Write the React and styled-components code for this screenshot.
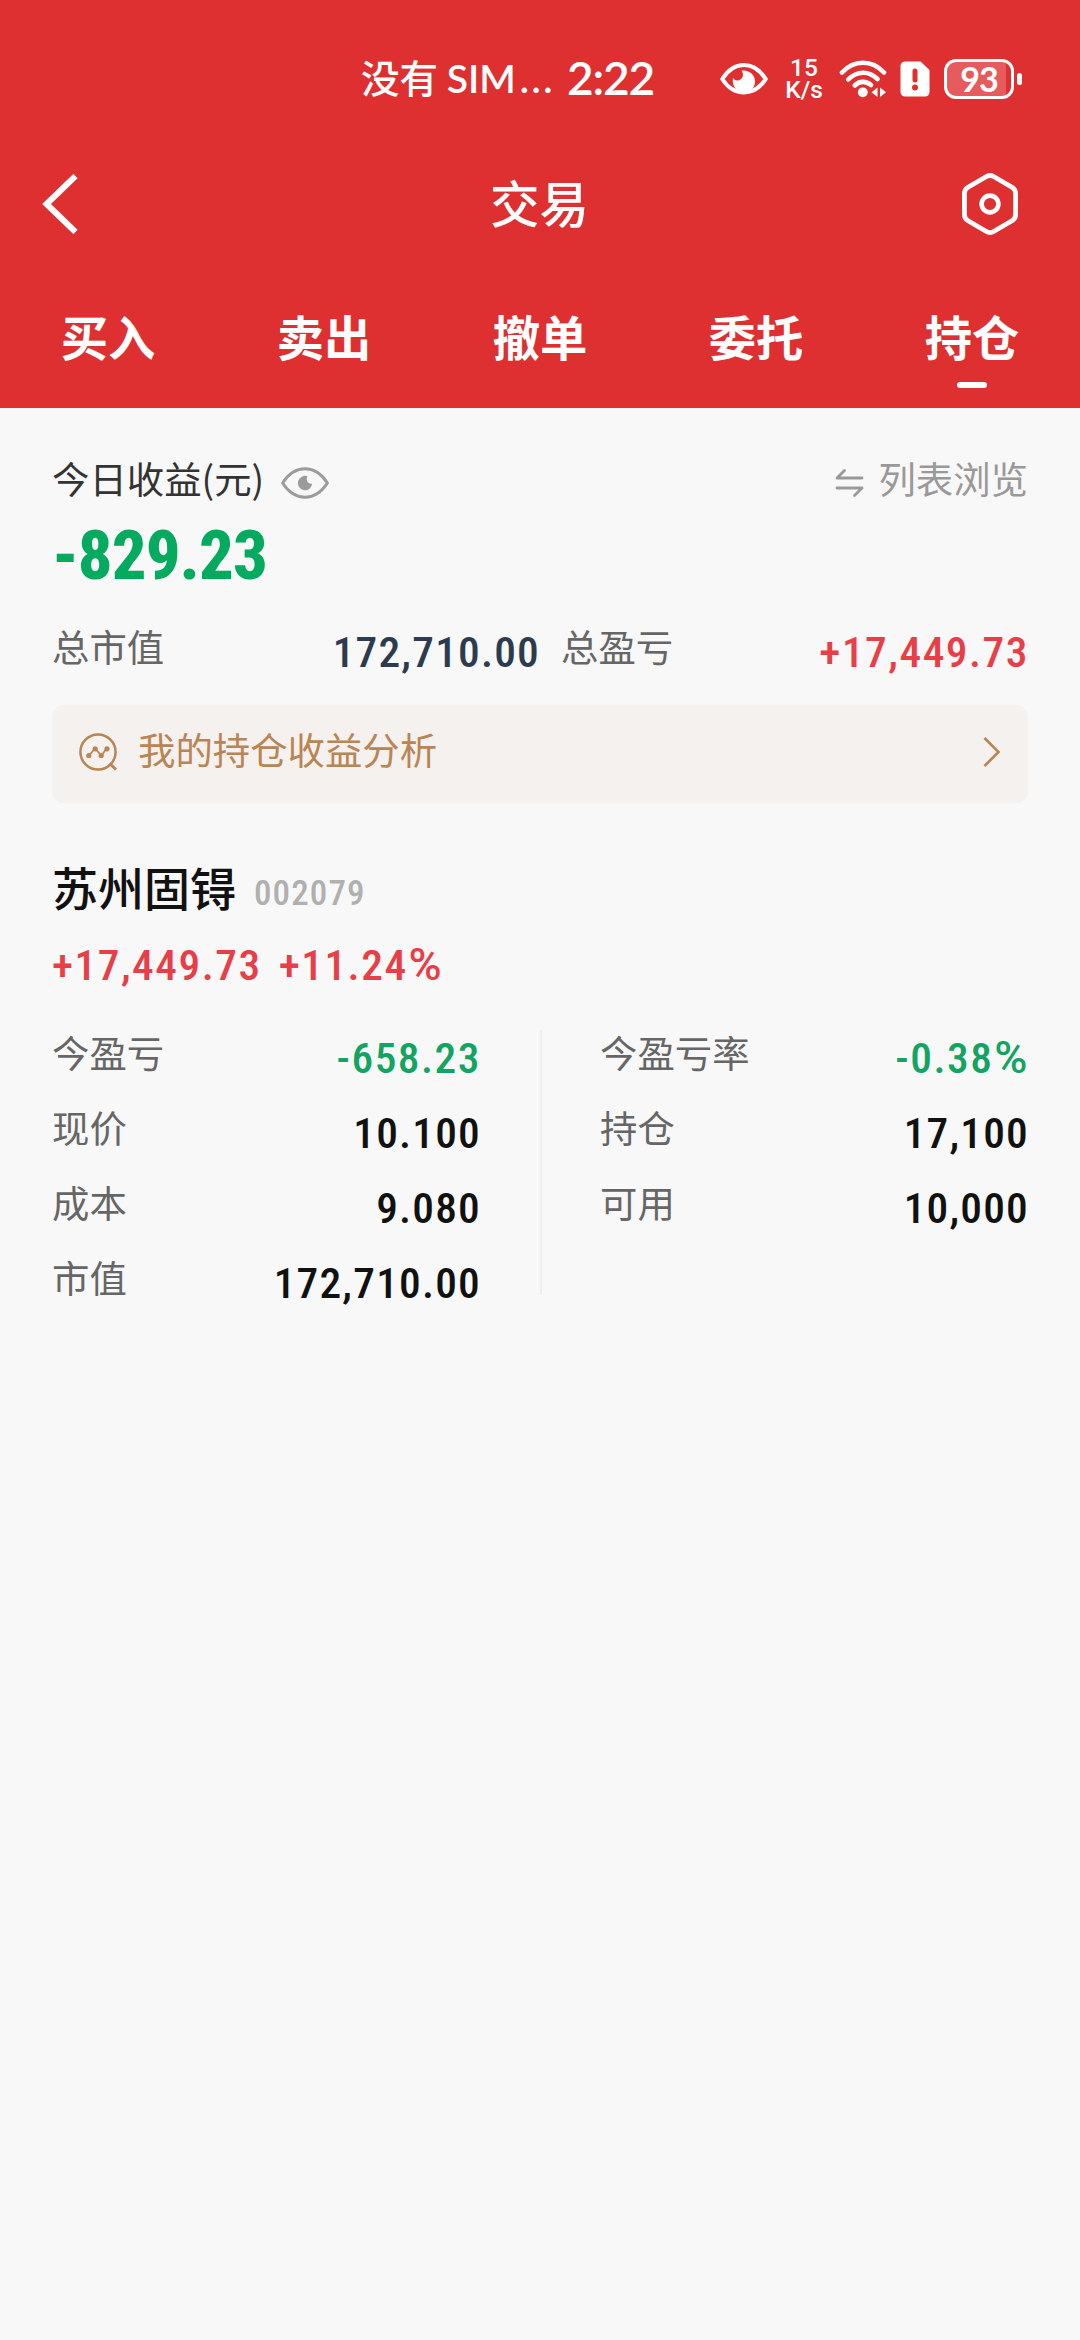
import React from 'react';
import styled, { createGlobalStyle } from 'styled-components';

const TABS = ['买入', '卖出', '撤单', '委托', '持仓'];

const LEFT = [
  { label: '今盈亏', value: '-658.23', tone: 'down' },
  { label: '现价', value: '10.100' },
  { label: '成本', value: '9.080' },
  { label: '市值', value: '172,710.00' },
];

const RIGHT = [
  { label: '今盈亏率', value: '-0.38', unit: '%', tone: 'down' },
  { label: '持仓', value: '17,100' },
  { label: '可用', value: '10,000' },
];

const tones = {
  up: '#e83e47',
  down: '#14a462',
  navy: '#2c3b4d',
  ink: '#111111',
};

const StatusBar = () => (
  <Status>
    <Carrier>没有 <Latin>SIM<Dots>...</Dots></Latin></Carrier>
    <Clock>2:22</Clock>
    <StatusIcons>
      <svg width="48" height="34" viewBox="0 0 48 34" fill="none">
        <path d="M2.200 17C8 8 16 3 24 3s16 5 21.800 14C40 26 32 30.500 24 30.500S8 26 2.200 17z" stroke="#fff" strokeWidth="4" strokeLinejoin="round" />
        <path d="M21.500 8.600c3 4.400 1 9-3 9.800-2.600.5-4.600-.6-5.500-2.400C11.500 24 17 30.500 24 30.500c6.500 0 11-5 11-11 0-6.500-5.500-11.900-13.500-10.900z" fill="#fff" />
      </svg>
      <Speed>
        <span>15</span>
        <span>K/s</span>
      </Speed>
      <svg width="48" height="38" viewBox="0 0 48 38" fill="none">
        <g stroke="#fff" strokeWidth="4.600" strokeLinecap="round">
          <path d="M3 12.500C15 -0.500 33 -0.500 45 12.500" />
          <path d="M9.200 19.500C18 10.500 30 10.500 38.500 19" />
          <path d="M15.700 25.500C20.500 20.800 27 20.800 32 25" />
        </g>
        <circle cx="23.800" cy="32.300" r="4.900" fill="#fff" />
        <path d="M38.500 27.500v9.500l-6-4.800zM41 27.500v9.500l6-4.800z" fill="#fff" />
      </svg>
      <SimIcon width="30" height="36" viewBox="0 0 30 36">
        <path d="M5 .5h15.500L29.500 9v22a4.500 4.500 0 0 1-4.500 4.500H5A4.500 4.500 0 0 1 .5 31V5A4.500 4.500 0 0 1 5 .5z" fill="#fff" />
        <path d="M15 10v9" stroke="#de3031" strokeWidth="5" strokeLinecap="round" />
        <circle cx="15" cy="26.500" r="3" fill="#de3031" />
      </SimIcon>
      <Battery>
        <BatteryBody>93</BatteryBody>
        <BatteryTip />
      </Battery>
    </StatusIcons>
  </Status>
);

const Header = () => (
  <Top>
    <StatusBar />
    <TitleBar>
      <svg width="37" height="60" viewBox="0 0 37 60" fill="none">
        <path d="M33.500 2L4.500 30l29 28" stroke="#fff" strokeWidth="6" />
      </svg>
      <Title>交易</Title>
      <svg width="58" height="64" viewBox="0 0 58 64" fill="none" stroke="#fff">
        <path
          d="M25.400 4.500Q29 2.400 32.600 4.500L51 15.200Q54.600 17.300 54.600 21.500V42.500Q54.600 46.700 51 48.800L32.600 59.500Q29 61.600 25.400 59.500L7 48.800Q3.400 46.700 3.400 42.500V21.500Q3.400 17.300 7 15.200Z"
          strokeWidth="4.800"
        />
        <circle cx="29" cy="32" r="8.400" strokeWidth="4.600" />
      </svg>
    </TitleBar>
    <Tabs>
      {TABS.map(tab => (
        <Tab key={tab} $active={tab === '持仓'}>{tab}</Tab>
      ))}
    </Tabs>
  </Top>
);

const Summary = () => (
  <div>
    <IncomeHead>
      <IncomeLabel>今日收益(元)</IncomeLabel>
      <EyeIcon width="50" height="34" viewBox="0 0 50 34" fill="none">
        <path d="M2.600 17C8.500 8 16.500 2.800 25 2.800S41.500 8 47.400 17C41.500 26.200 33.500 31.200 25 31.200S8.500 26.200 2.600 17z" stroke="#9b9b9b" strokeWidth="3" strokeLinejoin="round" />
        <path d="M27.500 10.300a7.200 7.200 0 1 0 4.700 7.200c-3.600 1.200-7-2.900-4.700-7.200z" fill="#9b9b9b" />
      </EyeIcon>
      <Switcher>
        <svg width="29" height="30" viewBox="0 0 29 30" fill="none" stroke="#999" strokeWidth="2.800" strokeLinecap="round" strokeLinejoin="round">
          <path d="M9.500 2.500L2 10h25" />
          <path d="M2 20h25l-7.500 7.500" />
        </svg>
        列表浏览
      </Switcher>
    </IncomeHead>
    <Income>-829.23</Income>
    <Totals>
      <Cell $pad={13}>
        <Label>总市值</Label>
        <Num $tone="navy">172,710.00</Num>
      </Cell>
      <Cell $pad={13}>
        <Label>总盈亏</Label>
        <Num $tone="up">+17,449.73</Num>
      </Cell>
    </Totals>
  </div>
);

const Analysis = () => (
  <Banner>
    <svg width="40" height="40" viewBox="0 0 40 40" fill="none" stroke="#b98554">
      <circle cx="20" cy="20" r="17.600" strokeWidth="2.500" />
      <path d="M31.500 31.500l6.500 6" strokeWidth="3" />
      <path d="M11 23.500l6-7 6.500 7 5-7" strokeWidth="1.800" />
      <g fill="#b98554" stroke="none">
        <circle cx="10.800" cy="23.500" r="2.600" />
        <circle cx="17.200" cy="16.800" r="2.600" />
        <circle cx="23.200" cy="23.500" r="2.600" />
        <circle cx="29" cy="16.800" r="2.600" />
      </g>
    </svg>
    <BannerText>我的持仓收益分析</BannerText>
    <svg width="18" height="32" viewBox="0 0 18 32" fill="none">
      <path d="M1.500 2L15.500 16 1.500 30" stroke="#b98554" strokeWidth="2.600" />
    </svg>
  </Banner>
);

const Holding = () => (
  <div>
    <StockHead>
      <StockName>苏州固锝</StockName>
      <StockCode>002079</StockCode>
    </StockHead>
    <Profit>
      <Num $tone="up">+17,449.73</Num>
      <Num $tone="up">+11.24<Percent>%</Percent></Num>
    </Profit>
    <Details>
      <Column>
        {LEFT.map(item => <Detail key={item.label} {...item} />)}
      </Column>
      <Divider />
      <Column>
        {RIGHT.map(item => <Detail key={item.label} {...item} />)}
      </Column>
    </Details>
  </div>
);

const Detail = ({ label, value, unit, tone = 'ink' }) => (
  <Cell $pad={11}>
    <Label>{label}</Label>
    <Num $tone={tone}>{value}{unit && <Percent>{unit}</Percent>}</Num>
  </Cell>
);

export default function App() {
  return (
    <Page>
      <GlobalStyle />
      <Header />
      <Content>
        <Summary />
        <Analysis />
        <Holding />
      </Content>
    </Page>
  );
}

const GlobalStyle = createGlobalStyle`
  * {
    box-sizing: border-box;
  }

  body {
    margin: 0;
    background: #f8f8f8;
    font-family: "Noto Sans CJK SC", sans-serif;
  }

  svg {
    display: block;
    flex: none;
  }
`;

const Page = styled.div`
  width: 1080px;
  min-height: 2340px;
  background: #f8f8f8;
`;

const Top = styled.header`
  height: 408px;
  background: #de3031;
  color: #fff;
`;

const Status = styled.div`
  display: flex;
  align-items: center;
  height: 158px;
  padding-left: 361px;
`;

const Carrier = styled.div`
  width: 206px;
  font-size: 38.5px;
  font-weight: 500;
  line-height: 56px;
  white-space: nowrap;
  padding-bottom: 5px;
`;

const Latin = styled.span`
  font-family: Lato, sans-serif;
  font-size: 39px;
  font-weight: 600;
`;

const Dots = styled.span`
  letter-spacing: 2.5px;
  margin-left: 4px;
`;

const Clock = styled.div`
  width: 153px;
  font-family: Lato, sans-serif;
  font-size: 46px;
  font-weight: 600;
  line-height: 56px;
  letter-spacing: -1.2px;
  padding-bottom: 2px;
`;

const StatusIcons = styled.div`
  display: flex;
  align-items: center;
`;

const Speed = styled.div`
  display: flex;
  flex-direction: column;
  align-items: center;
  width: 36px;
  margin: 0 17px 0 18px;
  font-family: Roboto, sans-serif;
  font-size: 24.5px;
  font-weight: 500;
  line-height: 22px;
`;

const SimIcon = styled.svg`
  margin: 0 14px 0 13px;
`;

const Battery = styled.div`
  display: flex;
  align-items: center;
  gap: 3px;
`;

const BatteryBody = styled.div`
  display: flex;
  align-items: center;
  justify-content: center;
  width: 70px;
  height: 40px;
  border: 3px solid #fff;
  border-radius: 12px;
  background: linear-gradient(90deg, #e65c5c 92%, #de3031 92%);
  font-family: Lato, sans-serif;
  font-size: 34px;
  font-weight: 700;
  line-height: 34px;
  letter-spacing: -1px;
`;

const BatteryTip = styled.div`
  width: 5px;
  height: 12px;
  border-radius: 3px;
  background: #fff;
`;

const TitleBar = styled.div`
  display: grid;
  grid-template-columns: 1fr auto 1fr;
  align-items: center;
  height: 92px;
  padding: 0 61px 0 42px;

  > svg:last-child {
    justify-self: end;
  }
`;

const Title = styled.h1`
  margin: 0 0 5px 18px;
  font-size: 49.5px;
  font-weight: 500;
  line-height: 60px;
`;

const Tabs = styled.nav`
  display: grid;
  grid-template-columns: repeat(5, 1fr);
`;

const Tab = styled.div`
  display: flex;
  flex-direction: column;
  align-items: center;
  padding-top: 56px;
  font-size: 47.3px;
  font-weight: 700;
  line-height: 60px;

  &::after {
    content: '';
    width: 30px;
    height: 6px;
    margin-top: 16px;
    border-radius: 3px;
    background: ${p => (p.$active ? '#fff' : 'transparent')};
  }
`;

const Content = styled.main`
  padding: 40px 52px 0;
`;

const IncomeHead = styled.div`
  display: flex;
  align-items: center;
  height: 60px;
`;

const IncomeLabel = styled.div`
  font-size: 37.4px;
  color: #333;
`;

const EyeIcon = styled.svg`
  margin: 10px 0 0 16px;
`;

const Switcher = styled.div`
  display: flex;
  align-items: center;
  gap: 14px;
  margin-left: auto;
  font-size: 37.4px;
  color: #999;

  > svg {
    margin-top: 9px;
  }
`;

const Num = styled.span`
  padding-top: 2px;
  font-family: "Roboto Condensed", Roboto, sans-serif;
  font-size: 43.4px;
  font-weight: 460;
  line-height: 60px;
  letter-spacing: ${p => (p.$tone === 'up' || p.$tone === 'down' ? 1.5 : 1.2)}px;
  margin-right: -1px;
  color: ${p => tones[p.$tone]};
`;

const Percent = styled.span`
  margin-left: 1px;
  font-family: Roboto, sans-serif;
  font-size: 45px;
`;

const Income = styled(Num)`
  display: block;
  font-size: 68.5px;
  font-weight: 800;
  line-height: 92px;
  letter-spacing: -0.9px;
  color: #04aa5e;
`;

const Label = styled.span`
  font-size: 37.4px;
  line-height: 50px;
  color: #666;
`;

const Cell = styled.div`
  display: flex;
  align-items: center;
  justify-content: space-between;
  height: 75px;

  > ${Label} {
    padding-bottom: ${p => p.$pad}px;
  }
`;

const Totals = styled.div`
  display: grid;
  grid-template-columns: 487px 467px;
  gap: 22px;
  align-items: center;
  height: 100px;
`;

const Banner = styled.div`
  display: flex;
  align-items: center;
  height: 98px;
  margin-top: 3px;
  padding: 0 27px 4px 26px;
  border-radius: 12px;
  background: #f5f1ee;
`;

const BannerText = styled.div`
  flex: 1;
  margin-left: 20px;
  padding-bottom: 7px;
  font-size: 37.4px;
  line-height: 50px;
  color: #b98554;
`;

const StockHead = styled.div`
  display: flex;
  align-items: center;
  height: 70px;
  margin-top: 48px;
`;

const StockName = styled.div`
  font-size: 46px;
  font-weight: 500;
  line-height: 60px;
  color: #111;
`;

const StockCode = styled(Num)`
  padding-top: 16px;
  margin-left: 18px;
  font-size: 35px;
  line-height: 40px;
  letter-spacing: 1.1px;
  color: #b0b0b0;
`;

const Profit = styled.div`
  display: flex;
  align-items: center;
  gap: 18px;
  height: 87px;
`;

const Details = styled.div`
  display: flex;
  margin-top: 12px;
`;

const Column = styled.div`
  width: 428px;
`;

const Divider = styled.div`
  width: 2px;
  margin: 10px 58px 25px 60px;
  background: #eeeeee;
`;
